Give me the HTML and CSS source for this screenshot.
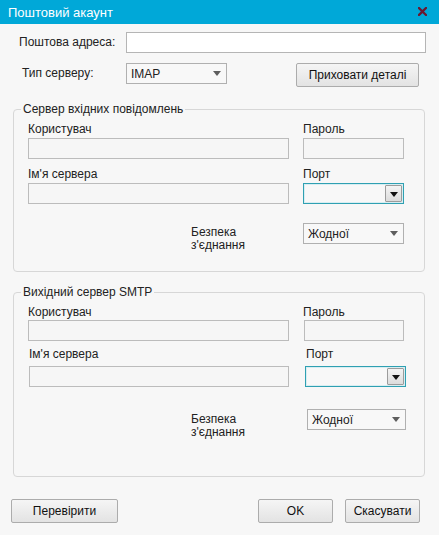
FILE: index.html
```html
<!DOCTYPE html>
<html lang="uk">
<head>
<meta charset="utf-8">
<title>Поштовий акаунт</title>
<link rel="stylesheet" href="styles.css">
</head>
<body>
<div class="window">
  <div class="titlebar">
    <span class="title">Поштовий акаунт</span>
    <svg class="close" width="9" height="9" viewBox="0 0 9 9"><path d="M1 1 L8 8 M8 1 L1 8" stroke="#6b1830" stroke-width="2.3" stroke-linecap="square"/></svg>
  </div>

  <div class="row row-email">
    <label class="lbl lbl-email">Поштова адреса:</label>
    <div class="field field-white field-email"></div>
  </div>

  <div class="row row-type">
    <label class="lbl lbl-type">Тип серверу:</label>
    <div class="select select-imap"><span>IMAP</span><span class="arrow"></span></div>
    <button class="btn btn-hide">Приховати деталі</button>
  </div>

  <fieldset class="group group-in">
    <legend>Сервер вхідних повідомлень</legend>
    <div class="grid">
      <div class="cell"><div class="flabel">Користувач</div><div class="field"></div></div>
      <div class="cell"><div class="flabel">Пароль</div><div class="field"></div></div>
      <div class="cell"><div class="flabel">Ім'я сервера</div><div class="field"></div></div>
      <div class="cell"><div class="flabel">Порт</div><div class="select select-port"><span class="dropbtn"><span class="dtri"></span></span></div></div>
      <div class="cell sec-label">Безпека<br>з'єднання</div>
      <div class="cell"><div class="select"><span>Жодної</span><span class="arrow"></span></div></div>
    </div>
  </fieldset>

  <fieldset class="group group-out">
    <legend>Вихідний сервер SMTP</legend>
    <div class="grid">
      <div class="cell"><div class="flabel">Користувач</div><div class="field"></div></div>
      <div class="cell"><div class="flabel">Пароль</div><div class="field shift1"></div></div>
      <div class="cell"><div class="flabel shift1">Ім'я сервера</div><div class="field field-srv2"></div></div>
      <div class="cell"><div class="flabel shift3">Порт</div><div class="select select-port shift2"><span class="dropbtn"><span class="dtri"></span></span></div></div>
      <div class="cell sec-label">Безпека<br>з'єднання</div>
      <div class="cell"><div class="select shift4"><span>Жодної</span><span class="arrow"></span></div></div>
    </div>
  </fieldset>

  <div class="actions">
    <button class="btn btn-check">Перевірити</button>
    <button class="btn btn-ok">OK</button>
    <button class="btn btn-cancel">Скасувати</button>
  </div>
</div>
</body>
</html>
```

FILE: styles.css
```css
* { box-sizing: border-box; }

html, body {
  margin: 0;
  padding: 0;
  background: #f7f7f7;
}

body {
  font-family: "Liberation Sans", Arial, sans-serif;
  font-size: 12px;
  color: #222222;
}

.window {
  width: 439px;
  height: 535px;
  background: #f7f7f7;
}

.titlebar {
  height: 24px;
  background: #00a8d8;
  display: flex;
  align-items: center;
  padding: 2px 12px 0 8px;
}

.title {
  color: #ffffff;
  font-size: 13px;
  line-height: 22px;
}

.close {
  margin-left: auto;
  margin-top: -3px;
}

.row {
  display: flex;
  align-items: flex-start;
}

.lbl {
  line-height: 21px;
  height: 21px;
}

.row-email {
  margin-top: 8px;
  padding-left: 19px;
}

.lbl-email { width: 107px; }

.row-type {
  margin-top: 10px;
  padding-left: 22px;
}

.lbl-type { width: 104px; }

.field {
  height: 21px;
  border: 1px solid #bcbcbc;
  background: #f6f6f6;
}

.field-white {
  background: #ffffff;
  border-color: #b5b5b5;
}

.field-email { width: 300px; }

.select {
  height: 21px;
  border: 1px solid #b0b0b0;
  background: #f8f8f8;
  display: flex;
  align-items: center;
  padding-left: 4px;
  width: 101px;
}

.select-imap { width: 101px; }

.arrow {
  margin-left: auto;
  margin-right: 5px;
  width: 0;
  height: 0;
  border-top: 5px solid #5e5e5e;
  border-left: 4.5px solid transparent;
  border-right: 4.5px solid transparent;
}

.select-port {
  border-color: #2fa0b2;
  background: #f8f8f8;
  padding: 1px;
  justify-content: flex-end;
  box-shadow: inset 0 0 0 1px #d8eef2;
}

.dropbtn {
  width: 17px;
  height: 17px;
  border: 1px solid #9c9c9c;
  border-radius: 1px;
  background: linear-gradient(#f4f4f4, #dcdcdc);
  display: flex;
  align-items: center;
  justify-content: center;
}

.dtri {
  width: 0;
  height: 0;
  border-top: 5px solid #111111;
  border-left: 4px solid transparent;
  border-right: 4px solid transparent;
  margin-top: 1px;
}

.btn {
  font-family: "Liberation Sans", Arial, sans-serif;
  font-size: 12px;
  color: #111111;
  height: 24px;
  border: 1px solid #acacac;
  border-radius: 2px;
  background: linear-gradient(#f5f5f5, #e3e3e3);
  padding: 0;
  margin: 0;
}

.btn-hide {
  width: 123px;
  margin-left: 69px;
}

.group {
  margin: 15px 14px 0 13px;
  border: 1px solid #d7d7d7;
  border-radius: 4px;
  padding: 6px 0 19px 14px;
  min-width: 0;
}

.group legend {
  padding: 0 2px;
  margin-left: -7px;
  line-height: 14px;
  color: #222222;
}

.grid {
  display: grid;
  grid-template-columns: 261px 101px;
  column-gap: 14px;
  row-gap: 8px;
}

.flabel {
  line-height: 14px;
  height: 14px;
  margin-bottom: 2px;
}

.sec-label {
  padding-left: 163px;
  padding-top: 3px;
  line-height: 13px;
  white-space: nowrap;
}

.group-in .grid > .cell:nth-child(5),
.group-in .grid > .cell:nth-child(6) {
  margin-top: 11px;
}

.group-out {
  margin-top: 13px;
  padding-bottom: 37px;
}

.group-out .grid { row-gap: 6px; }

.group-out .flabel { margin-bottom: 1px; }
.group-out .flabel.shift1 { margin-bottom: 5px; padding-left: 1px; }
.group-out .flabel.shift3 { margin-bottom: 5px; padding-left: 3px; }

.group-out .grid > .cell:nth-child(5),
.group-out .grid > .cell:nth-child(6) {
  margin-top: 16px;
}

.group-out .sec-label { padding-top: 4px; }

.field.shift1 { margin-left: 1px; }
.field-srv2 { margin-left: 1px; width: 260px; }
.select.shift2 { margin-left: 2px; }
.select.shift4 { margin-left: 4px; width: 99px; }

.actions {
  display: flex;
  margin-top: 22px;
  padding: 0 19px 0 11px;
}

.btn-check { width: 107px; }
.btn-ok { width: 75px; margin-left: auto; }
.btn-cancel { width: 75px; margin-left: 12px; }
```
